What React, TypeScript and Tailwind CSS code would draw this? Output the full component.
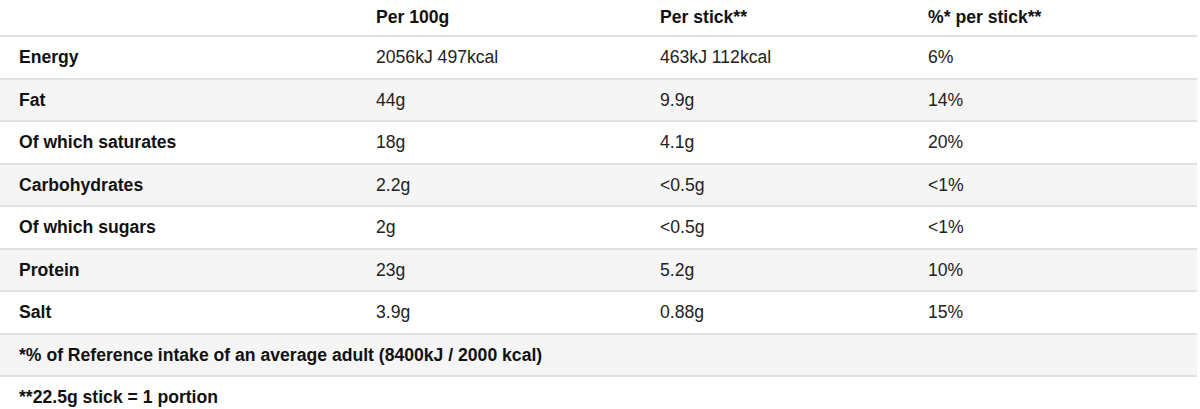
const rows = [
  ["Energy", "2056kJ 497kcal", "463kJ 112kcal", "6%"],
  ["Fat", "44g", "9.9g", "14%"],
  ["Of which saturates", "18g", "4.1g", "20%"],
  ["Carbohydrates", "2.2g", "<0.5g", "<1%"],
  ["Of which sugars", "2g", "<0.5g", "<1%"],
  ["Protein", "23g", "5.2g", "10%"],
  ["Salt", "3.9g", "0.88g", "15%"],
];

const cols = "grid grid-cols-[357px_284px_268px_1fr]";

export default function App() {
  return (
    <div
      className="w-[1200px] h-[409px] bg-white overflow-hidden text-[17.6px] text-[#222]"
      style={{ fontFamily: '"Liberation Sans", Arial, sans-serif' }}
    >
      <div className="w-[1197px]">
        <div className={`${cols} h-[35px] items-center font-bold text-[#111]`}>
          <div className="pl-[19px]"></div>
          <div className="pl-[19px]">Per 100g</div>
          <div className="pl-[19px]">Per stick**</div>
          <div className="pl-[19px]">%* per stick**</div>
        </div>
        {rows.map((r, i) => (
          <div
            key={r[0]}
            className={`${cols} h-[42.5px] items-center border-t-2 border-[#e1e1e1] ${
              i % 2 === 1 ? "bg-[#f5f5f5]" : "bg-white"
            }`}
          >
            <div className="pl-[19px] font-bold text-[#111]">{r[0]}</div>
            <div className="pl-[19px]">{r[1]}</div>
            <div className="pl-[19px]">{r[2]}</div>
            <div className="pl-[19px]">{r[3]}</div>
          </div>
        ))}
        <div className="h-[42.5px] flex items-center pl-[19px] border-t-2 border-[#e1e1e1] bg-[#f5f5f5] font-bold text-[#111]">
          *% of Reference intake of an average adult (8400kJ / 2000 kcal)
        </div>
        <div className="h-[42.5px] flex items-center pl-[19px] border-t-2 border-[#e1e1e1] font-bold text-[#111]">
          **22.5g stick = 1 portion
        </div>
      </div>
    </div>
  );
}
